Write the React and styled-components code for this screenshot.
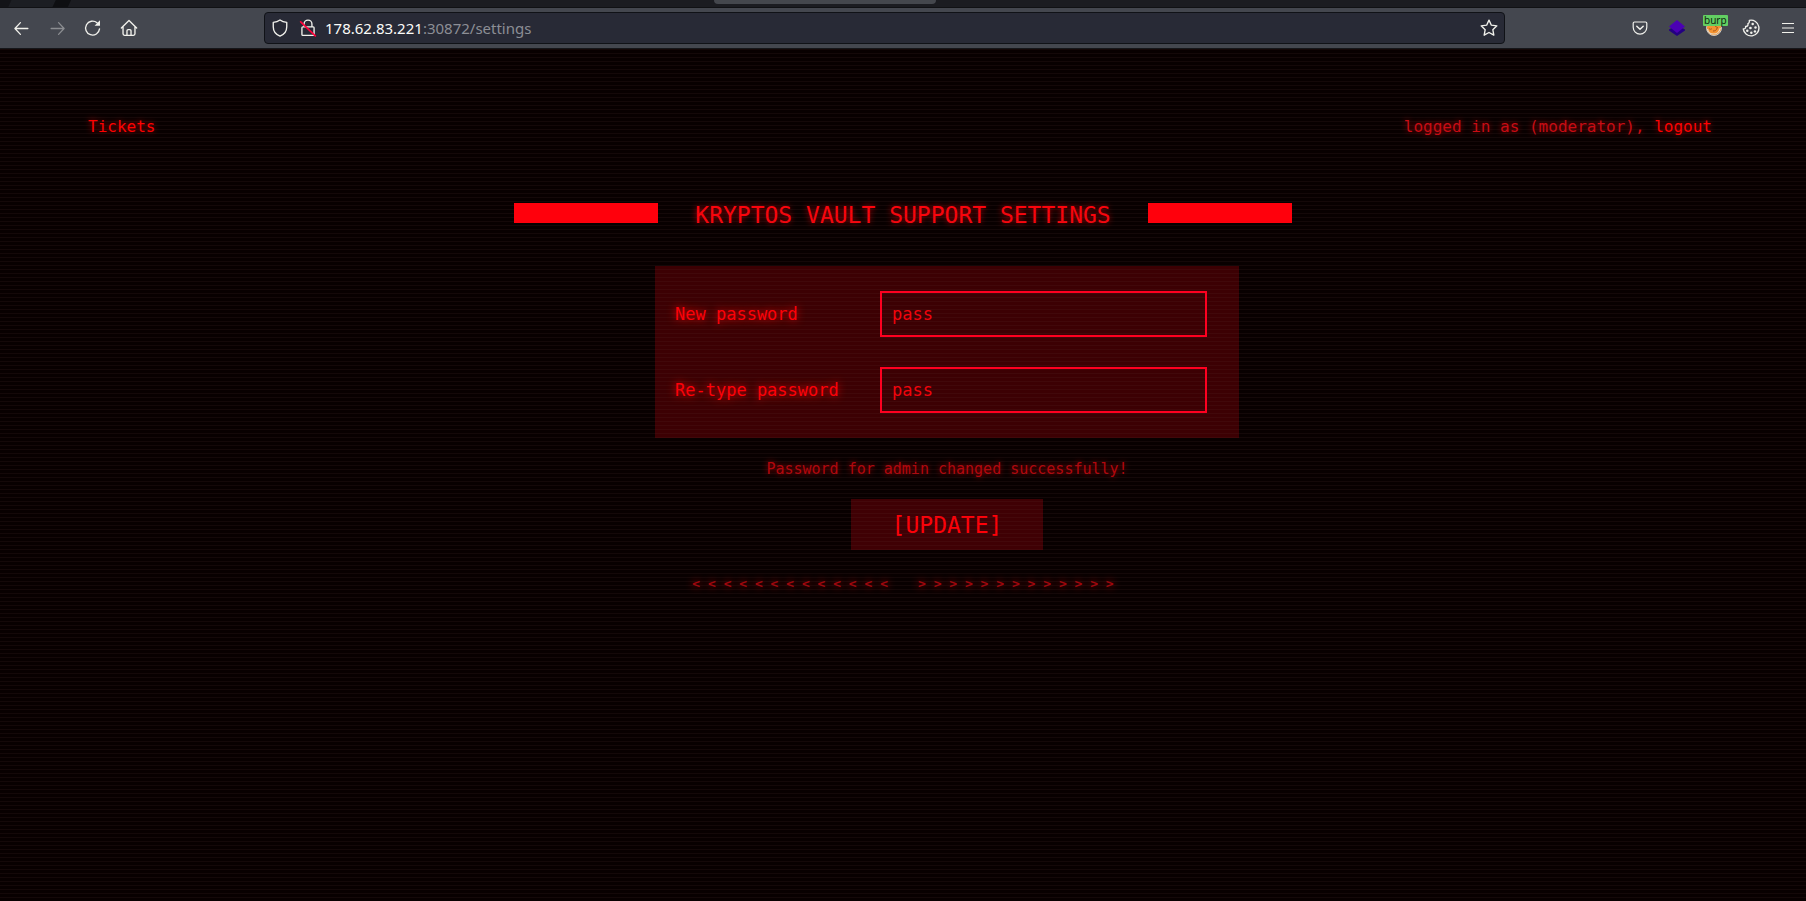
import React from "react";
import styled, { createGlobalStyle } from "styled-components";

const GlobalStyle = createGlobalStyle`
  *, *::before, *::after { box-sizing: border-box; }
  html, body { margin: 0; background: #0a0000; }
  button, input { font: inherit; margin: 0; }
`;

const mono = `"DejaVu Sans Mono", "Liberation Mono", monospace`;
const glow = `text-shadow: 0 0 6px rgba(255, 0, 10, 0.7);`;

const Window = styled.div`
  display: flex;
  flex-direction: column;
  min-height: 100vh;
`;

/* Browser chrome */
const TabStrip = styled.div`
  display: flex;
  justify-content: center;
  height: 8px;
  padding-right: 156px;
  background: linear-gradient(115deg, #131418 0 10px, #1c1e23 11px 50px, #0e0f12 51px 64px, #1b1c21 65px);
  border-bottom: 1px solid #101114;
`;

const ActiveTab = styled.div`
  width: 222px;
  height: 4px;
  background: #44474d;
  border-radius: 0 0 4px 4px;
`;

const Toolbar = styled.nav`
  display: flex;
  align-items: center;
  height: 41px;
  padding-left: 3px;
  background: #44474f;
  border-bottom: 1px solid #15161a;
`;

const ToolGroup = styled.div`
  display: flex;
  gap: ${(p) => p.$gap || 0}px;
`;

const ToolButton = styled.button`
  position: relative;
  display: grid;
  place-items: center;
  width: 36px;
  height: 32px;
  padding: 0;
  border: 0;
  background: none;
  color: ${(p) => (p.disabled ? "#8b8d91" : "#f1f1ec")};
`;

const Badge = styled.span`
  position: absolute;
  top: 3px;
  left: 7px;
  padding: 0 1px;
  border-radius: 1px;
  background: #62cf62;
  color: #10240f;
  font: 10px/11px "Noto Sans", sans-serif;
`;

const AddressBar = styled.div`
  flex: 1;
  display: flex;
  align-items: center;
  height: 32px;
  margin: 0 117px;
  padding: 0 6px;
  border: 1px solid #101217;
  border-radius: 4px;
  background: #282a36;
  color: #f1f1ec;
`;

const AddressIcon = styled.span`
  display: grid;
  place-items: center;
  width: 18px;
  margin-right: ${(p) => p.$after || 0}px;
`;

const Address = styled.span`
  flex: 1;
  font: 15px/20px "Noto Sans", "Open Sans", sans-serif;
  color: #8c8e95;
`;

const Host = styled.span`
  color: #fbfbf8;
`;

/* Page */
const Page = styled.div`
  position: relative;
  flex: 1;
  padding-top: 66px;
  background: #080000;
  color: #ff0000;
  font: 16px/24px ${mono};

  &::after {
    content: "";
    position: absolute;
    inset: 0;
    pointer-events: none;
    background: repeating-linear-gradient(rgba(100, 60, 60, 0.13) 0 1px, transparent 1px 4px);
  }
`;

const Header = styled.header`
  display: flex;
  justify-content: space-between;
  padding: 0 94px 0 88px;
  ${glow}
`;

const Account = styled.span`
  color: #c80c14;
`;

const PageLink = styled.a`
  color: #ff0000;
  text-decoration: none;
`;

const TitleRow = styled.div`
  display: flex;
  justify-content: center;
  align-items: baseline;
  gap: 37px;
  margin-top: 61px;
`;

const Bar = styled.span`
  position: relative;
  z-index: 1;
  width: 144px;
  height: 20px;
  background: #ff000c;
`;

const Title = styled.h1`
  margin: 0;
  color: #fb040c;
  font-size: 23px;
  line-height: 30px;
  font-weight: 400;
  ${glow}
`;

const Form = styled.form`
  display: flex;
  flex-direction: column;
  align-items: center;
  margin-top: 36px;
  padding-left: 88px;
`;

const Fields = styled.div`
  display: flex;
  flex-direction: column;
  gap: 30px;
  width: 584px;
  max-width: 100%;
  padding: 25px 32px 25px 20px;
  background: #3c0003;
`;

const Field = styled.div`
  display: grid;
  grid-template-columns: 205px 1fr;
  align-items: center;
`;

const Label = styled.label`
  color: #ff0008;
  font-size: 17px;
  text-shadow: 0 0 8px #ff0008;
`;

const TextInput = styled.input`
  position: relative;
  z-index: 1;
  width: 100%;
  height: 46px;
  padding: 0 10px;
  border: 2px solid #ff0020;
  border-radius: 0;
  outline: 0;
  background: none;
  color: #f0040c;
  font-size: 17px;
`;

const Status = styled.p`
  margin: 19px 0 18px;
  color: #b4060c;
  font-size: 15px;
  ${glow}
`;

const UpdateButton = styled.button`
  width: 192px;
  height: 51px;
  padding: 0;
  border: 0;
  background: #3f0004;
  color: #ff0008;
  font-size: 23px;
`;

const Arrows = styled.div`
  display: flex;
  justify-content: center;
  gap: 30px;
  margin-top: 22px;
  color: #a0060c;
  font-size: 13px;
  font-weight: 700;
  text-shadow: 0 0 8px #d00008;
`;

const Line = ({ size = 18, children, ...rest }) => (
  <svg width={size} height={size} viewBox="0 0 16 16" fill="none" stroke="currentColor" strokeWidth="1.2" strokeLinecap="round" strokeLinejoin="round" aria-hidden="true" {...rest}>
    {children}
  </svg>
);

const BackIcon = () => <Line size={17}><path d="M14 8H2M7 2.5 1.8 8 7 13.5" /></Line>;
const ForwardIcon = () => <Line size={17}><path d="M2 8h12M9 2.5 14.2 8 9 13.5" /></Line>;
const ReloadIcon = () => (
  <Line>
    <path d="M13.8 8.8A6.2 6.2 0 1 1 11.6 3.3" />
    <path d="M14.2 1.2v4.9H9.4z" fill="currentColor" stroke="none" />
  </Line>
);
const HomeIcon = () => (
  <Line>
    <path d="M1.2 8 8 1.4 14.8 8M2.7 6.8v6.4c0 .8.5 1.3 1.3 1.3h8c.8 0 1.3-.5 1.3-1.3V6.8M6.2 14.4v-4c0-.6.4-1 1-1h1.6c.6 0 1 .4 1 1v4" />
  </Line>
);
const ShieldIcon = () => (
  <Line><path d="M8 .9c1.8 1.3 3.8 1.9 6 2.1v3.8c0 4-2.4 6.9-6 8.4-3.6-1.5-6-4.4-6-8.4V3C4.2 2.8 6.2 2.2 8 .9z" /></Line>
);
const LockIcon = () => (
  <Line>
    <path d="M4.5 7V4.500a3.500 3.500 0 0 1 7 0V7M3.400 7h9.200c.5 0 .8.3.8.8v6c0 .5-.3.8-.8.8H3.400c-.5 0-.8-.3-.8-.8v-6c0-.5.3-.8.8-.8z" />
    <path d="M1.5 2.500 14.500 15" stroke="#ff0039" strokeWidth="1.5" />
  </Line>
);
const StarIcon = () => (
  <Line><path d="m8 1 2.1 4.500 4.900.6-3.600 3.400.9 4.900L8 12l-4.300 2.400.9-4.900L1 6.100l4.900-.6z" /></Line>
);
const PocketIcon = () => (
  <Line size={16}>
    <path d="M2.500 2h11c.8 0 1.300.5 1.300 1.300v4a6.800 6.800 0 0 1-13.600 0v-4C1.200 2.500 1.700 2 2.500 2z" />
    <path d="M4.800 6.300 8 9.300l3.200-3" strokeWidth="1.5" />
  </Line>
);
const LayersIcon = () => (
  <svg width="16" height="16" viewBox="0 0 16 16" aria-hidden="true">
    <path d="M0 9.500 8 5l8 4.500v1L8 16l-8-5.500z" fill="#240082" />
    <path d="m8 0 8 6.500L8 13 0 6.500z" fill="#4b00b4" />
  </svg>
);
const FaceIcon = () => (
  <svg width="16" height="16" viewBox="0 0 16 16" aria-hidden="true">
    <circle cx="8" cy="8" r="7.5" fill="#f39332" stroke="#c9c6c1" />
    <path d="M3 8.500c1 1 2 1 3 0M7 11c2 0 4-1 4-3M9 6l3 2" stroke="#a9581c" fill="none" />
    <path d="M1.500 9c.6 3 3.200 5 6 5s6-2 6.800-6" stroke="#e8dccb" strokeWidth="1.2" fill="none" />
  </svg>
);
const CookieIcon = () => (
  <Line size={18}>
    <path d="M6.500 1.200A7 7 0 1 1 1.100 8.800c1.500.2 2.400-.8 2.100-2.200 1.600.1 2.500-.9 2-2.300C6.300 3.700 6.800 2.600 6.500 1.200z" />
    <g fill="currentColor" stroke="none">
      <circle cx="9.500" cy="4.500" r="1.100" /><circle cx="7.500" cy="8" r="1.200" /><circle cx="12" cy="7.500" r="1.100" />
      <circle cx="4.700" cy="10.500" r="1.100" /><circle cx="8.300" cy="12.300" r="1.100" /><circle cx="11.500" cy="11" r="1.100" />
    </g>
  </Line>
);
const MenuIcon = () => (
  <svg width="12" height="12" viewBox="0 0 12 12" stroke="currentColor" aria-hidden="true">
    <path d="M0 1.500h12M0 6h12M0 10.500h12" />
  </svg>
);

function BrowserChrome() {
  return (
    <>
      <TabStrip><ActiveTab /></TabStrip>
      <Toolbar>
        <ToolGroup>
          <ToolButton aria-label="Back"><BackIcon /></ToolButton>
          <ToolButton aria-label="Forward" disabled><ForwardIcon /></ToolButton>
          <ToolButton aria-label="Reload"><ReloadIcon /></ToolButton>
          <ToolButton aria-label="Home"><HomeIcon /></ToolButton>
        </ToolGroup>
        <AddressBar>
          <AddressIcon $after={10}><ShieldIcon /></AddressIcon>
          <AddressIcon $after={8}><LockIcon /></AddressIcon>
          <Address><Host>178.62.83.221</Host>:30872/settings</Address>
          <AddressIcon><StarIcon /></AddressIcon>
        </AddressBar>
        <ToolGroup $gap={1}>
          <ToolButton aria-label="Pocket"><PocketIcon /></ToolButton>
          <ToolButton aria-label="Layers"><LayersIcon /></ToolButton>
          <ToolButton><FaceIcon /><Badge>burp</Badge></ToolButton>
          <ToolButton aria-label="Cookies"><CookieIcon /></ToolButton>
          <ToolButton aria-label="Menu"><MenuIcon /></ToolButton>
        </ToolGroup>
      </Toolbar>
    </>
  );
}

function PasswordField({ id, label }) {
  return (
    <Field>
      <Label htmlFor={id}>{label}</Label>
      <TextInput id={id} type="text" defaultValue="pass" spellCheck={false} />
    </Field>
  );
}

export default function App() {
  return (
    <Window>
      <GlobalStyle />
      <BrowserChrome />
      <Page>
        <Header>
          <PageLink href="#tickets">Tickets</PageLink>
          <Account>
            logged in as (moderator), <PageLink href="#logout">logout</PageLink>
          </Account>
        </Header>
        <main>
          <TitleRow>
            <Bar />
            <Title>KRYPTOS VAULT SUPPORT SETTINGS</Title>
            <Bar />
          </TitleRow>
          <Form onSubmit={(e) => e.preventDefault()}>
            <Fields>
              <PasswordField id="new-password" label="New password" />
              <PasswordField id="retype-password" label="Re-type password" />
            </Fields>
            <Status>Password for admin changed successfully!</Status>
            <UpdateButton type="submit">[UPDATE]</UpdateButton>
          </Form>
          <Arrows>
            <span>{Array(13).fill("<").join(" ")}</span>
            <span>{Array(13).fill(">").join(" ")}</span>
          </Arrows>
        </main>
      </Page>
    </Window>
  );
}
